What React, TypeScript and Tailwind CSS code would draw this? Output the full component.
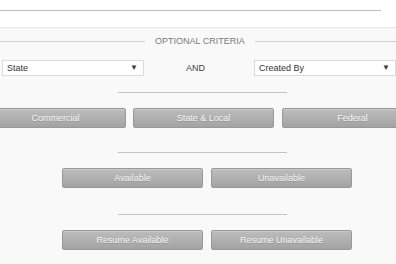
import type { ReactNode } from "react";

function Sep() {
  return <div className="ml-[118px] h-px w-[169px] bg-[#c4c4c4]" />;
}

function GrayButton({ children, className = "" }: { children: ReactNode; className?: string }) {
  return (
    <button
      type="button"
      className={`flex h-[20px] w-[141px] shrink-0 items-center justify-center rounded-[2px] border border-[#999] bg-linear-to-b from-[#bdbdbd] to-[#a3a3a3] text-[9px] leading-none text-[#f8f8f8] shadow-[inset_0_1px_0_rgba(255,255,255,0.2)] [text-shadow:0_1px_0_rgba(0,0,0,0.18)] ${className}`}
    >
      {children}
    </button>
  );
}

function FakeSelect({ label }: { label: string }) {
  return (
    <div className="flex h-[16px] w-[142px] shrink-0 items-center justify-between border border-[#dadada] bg-white pl-[4px] pr-[5px] text-[9px] leading-none text-[#333]">
      <span>{label}</span>
      <span className="text-[8px] text-[#3a3a3a]">▼</span>
    </div>
  );
}

export default function App() {
  return (
    <div className="h-[264px] w-[396px] overflow-hidden bg-[#f9f9f9] font-['Liberation_Sans',Arial,sans-serif]">
      <div className="h-[28px] border-b border-[#e8e8e8] bg-white pt-[10px]">
        <div className="h-px w-[381px] bg-[#bdbdbd]" />
      </div>

      <div className="mt-[7px] flex h-[12px] items-center">
        <div className="h-px w-[145px] bg-[#d0d0d0]" />
        <span className="mx-[10px] text-[9px] leading-none whitespace-nowrap text-[#7a7a7a]">
          OPTIONAL CRITERIA
        </span>
        <div className="h-px flex-1 bg-[#d0d0d0]" />
      </div>

      <div className="mt-[13px] flex items-center pl-[2px]">
        <FakeSelect label="State" />
        <div className="flex-1 pr-[7px] text-center text-[9px] leading-none text-[#444]">
          AND
        </div>
        <FakeSelect label="Created By" />
      </div>

      <div className="mt-[16px]">
        <Sep />
      </div>
      <div className="mt-[15px] -ml-[15px] flex gap-[7px]">
        <GrayButton>Commercial</GrayButton>
        <GrayButton>State &amp; Local</GrayButton>
        <GrayButton className="ml-px">Federal</GrayButton>
      </div>

      <div className="mt-[24px]">
        <Sep />
      </div>
      <div className="mt-[15px] flex gap-2 pl-[62px]">
        <GrayButton>Available</GrayButton>
        <GrayButton>Unavailable</GrayButton>
      </div>

      <div className="mt-[26px]">
        <Sep />
      </div>
      <div className="mt-[15px] flex gap-2 pl-[62px]">
        <GrayButton>Resume Available</GrayButton>
        <GrayButton>Resume Unavailable</GrayButton>
      </div>
    </div>
  );
}
